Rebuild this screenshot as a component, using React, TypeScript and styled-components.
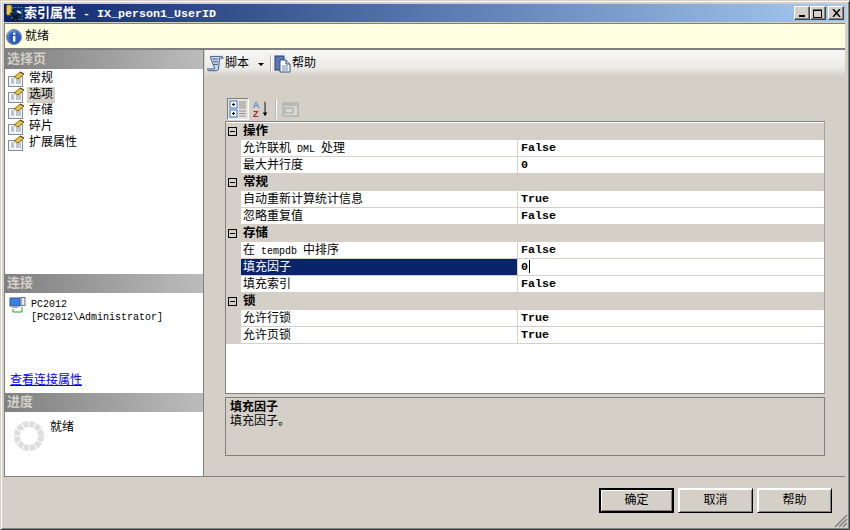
import React from 'react';
import styled, { createGlobalStyle } from 'styled-components';

const CJK = '"Liberation Mono", "Noto Sans CJK SC", monospace';

const Global = createGlobalStyle`
  html, body { margin: 0; padding: 0; background: #d4d0c8; }
  * { box-sizing: border-box; }
`;

const Dialog = styled.div`
  width: 850px; height: 530px; background: #d4d0c8;
  font: 12px/14px ${CJK}; color: #000;
  display: flex; flex-direction: column; position: relative;
  padding: 4px 4px 4px 3px;
  border-top: 1px solid #d4d0c8; border-left: 1px solid #d4d0c8;
  border-right: 1px solid #404040; border-bottom: 1px solid #404040;
  box-shadow: inset 1px 1px 0 #fff, inset -1px -1px 0 #808080;
  overflow: hidden;
`;
const TitleBar = styled.div`
  height: 18px; flex: none; margin: -1px -1px 0 0;
  background: linear-gradient(90deg, #0a246a, #a6caf0);
  display: flex; align-items: center; padding: 0 2px 0 2px;
`;
const TitleText = styled.span`
  color: #fff; font: bold 13px/16px ${CJK}; flex: 1; white-space: pre; padding-top: 2px;
`;
const TitleLatin = styled.span`font-size: 11.67px;`;
const WinBtns = styled.div`display: flex; align-items: center;`;
const WinBtn = styled.div<{ $gap?: number }>`
  width: 16px; height: 14px; background: #d4d0c8; margin-left: ${p => p.$gap ?? 0}px;
  border-top: 1px solid #fff; border-left: 1px solid #fff;
  border-right: 1px solid #404040; border-bottom: 1px solid #404040;
  box-shadow: inset -1px -1px 0 #808080;
  display: flex; align-items: center; justify-content: center;
`;
const MessageBar = styled.div`
  height: 27px; flex: none; margin: 1px 0 0 0; background: #ffffe1;
  border-top: 1px solid #808080; border-bottom: 2px solid #808080;
  border-left: 1px solid #808080;
  display: flex; align-items: center; padding: 1px 0 0 1px; gap: 3px; font-size: 12px;
`;
const Body = styled.div`
  height: 427px; flex: none; display: flex; border-bottom: 1px solid #808080;
`;
const Side = styled.div`
  width: 200px; flex: none; display: flex; flex-direction: column;
  background: #fff; border-left: 1px solid #808080; border-right: 1px solid #808080;
`;
const SideHeader = styled.div`
  height: 19px; flex: none; background: linear-gradient(90deg, #808080, #bcbcbc);
  color: #d4d0c8; font: bold 13px/19px ${CJK}; padding-left: 2px;
`;
const PageList = styled.div<{ $h: number }>`
  height: ${p => p.$h}px; flex: none; padding: 2px 0 0 3px;
`;
const PageRow = styled.div`
  height: 16px; display: flex; align-items: center; gap: 2px;
`;
const PageLabel = styled.span<{ $sel?: boolean }>`
  background: ${p => (p.$sel ? '#d4d0c8' : 'transparent')}; padding: 0 2px; line-height: 16px;
`;
const ConnBox = styled.div`
  height: 100px; flex: none; display: flex; flex-direction: column; padding: 4px 0 0 4px;
`;
const ConnRow = styled.div`display: flex; gap: 5px; flex: 1;`;
const ConnText = styled.div`font: 10px/13px "Liberation Mono", monospace; padding-top: 1px; white-space: pre;`;
const ConnLink = styled.a`
  color: #0000ff; text-decoration: underline; font-size: 12px; line-height: 14px; margin: 0 0 0 1px;
  padding-bottom: 5px;
`;
const ProgressBox = styled.div`
  flex: 1; display: flex; gap: 5px; padding: 6px 0 0 8px;
`;
const ProgressText = styled.span`margin-top: 3px;`;
const Main = styled.div`
  flex: 1; display: flex; flex-direction: column; min-width: 0;
`;
const ToolStrip = styled.div`
  height: 26px; flex: none; background: linear-gradient(180deg, #f7f7f5, #ebeae7 70%, #d4d0c8);
  display: flex; align-items: center; padding: 2px 0 0 2px; margin-left: 1px;
`;
const ToolItem = styled.span`display: flex; align-items: center; gap: 1px;`;
const Caret = styled.span`
  width: 0; height: 0; border: 3px solid transparent; border-top: 3px solid #000; border-bottom: 0;
  margin: 1px 4px 0 9px;
`;
const ToolSep = styled.span<{ $h?: number }>`
  width: 1px; height: ${p => p.$h ?? 18}px; background: #b8b8b4; border-right: 1px solid #fff; margin: 0 2px; box-sizing: content-box;
`;
const Content = styled.div`
  flex: 1; padding: 21px 20px 0 21px; display: flex; flex-direction: column;
`;
const GridTools = styled.div`
  height: 24px; flex: none; display: flex; align-items: center; padding-left: 2px; gap: 1px;
`;
const ToolToggle = styled.div<{ $on?: boolean }>`
  width: 22px; height: 22px; display: flex; align-items: center; justify-content: center;
  ${p => (p.$on ? 'background:#e6e4de;border:1px solid;border-color:#808080 #fff #fff #808080;' : '')}
`;
const Grid = styled.div`
  height: 273px; flex: none; background: #fff; padding: 1px 0 0 0;
  border: 1px solid #808080; border-right-color: #a0a0a0;
`;
const GroupRow = styled.div`
  height: 17px; background: #d4d0c8; display: flex; align-items: center;
  gap: 6px; padding-left: 2px;
`;
const GroupLabel = styled.span`font: bold 12.5px/17px ${CJK}; padding-top: 2px;`;
const Expander = styled.span`
  width: 9px; height: 9px; border: 1px solid #000; position: relative; flex: none;
  &::after { content: ''; position: absolute; left: 1px; right: 1px; top: 3px; height: 1px; background: #000; }
`;
const PropRow = styled.div`
  height: 17px; display: flex; background: #d4d0c8; padding-left: 15px;
`;
const PropName = styled.div<{ $sel?: boolean }>`
  width: 276px; flex: none; height: 16px; line-height: 18px; padding-left: 2px; white-space: pre; overflow: hidden;
  background: ${p => (p.$sel ? '#0a246a' : '#fff')}; color: ${p => (p.$sel ? '#fff' : '#000')};
`;
const NameLatin = styled.span`font-size: 10px;`;
const PropValue = styled.div`
  flex: 1; height: 16px; margin-left: 1px; background: #fff; padding-left: 3px;
  font: bold 11.67px/16px "Liberation Mono", monospace; display: flex;
`;
const CaretBar = styled.span`width: 1px; height: 13px; background: #000; margin: 1px 0 0 1px;`;
const Desc = styled.div`
  height: 59px; flex: none; margin-top: 3px; border: 1px solid #808080; padding: 3px 0 0 4px; line-height: 14px;
`;
const DescTitle = styled.div`font-weight: bold;`;
const Footer = styled.div`
  flex: 1; display: flex; justify-content: flex-end; align-items: flex-start;
  padding: 11px 13px 0 0; gap: 4px;
`;
const Btn = styled.button<{ $def?: boolean }>`
  width: 75px; height: 25px; background: #d4d0c8; padding: 0; font: 12px/14px ${CJK}; color: #000;
  border: ${p => (p.$def ? '2px' : '1px')} solid #000;
  border-top-color: ${p => (p.$def ? '#000' : '#fff')}; border-left-color: ${p => (p.$def ? '#000' : '#fff')};
  box-shadow: inset 1px 1px 0 #fff, inset -1px -1px 0 #808080;
`;
const Grip = styled.svg`position: absolute; right: 1px; bottom: 1px;`;

const PageIcon = () => (
  <svg width="17" height="16" viewBox="0 0 17 16">
    <rect x="0.5" y="5.5" width="14" height="10" fill="#f4f4f4" stroke="#7f8c9c" />
    <path d="M3 8h3M3 10h3M3 12h3M8 8h5M8 10h5M8 12h5" stroke="#8a97a8" />
    <path d="M6 6l6-5 4 2-6 5z" fill="#e8c040" stroke="#6c5a10" strokeWidth="0.8" />
    <path d="M12 1l4 2" stroke="#404040" />
  </svg>
);
const InfoIcon = () => (
  <svg width="16" height="16" viewBox="0 0 16 16">
    <defs><radialGradient id="ig" cx=".4" cy=".35" r=".7"><stop offset="0" stopColor="#9bbcf0" /><stop offset="1" stopColor="#1c46a8" /></radialGradient></defs>
    <circle cx="8" cy="8" r="7.5" fill="url(#ig)" stroke="#7a8aa8" />
    <circle cx="8" cy="8" r="5.5" fill="#2a5cc8" />
    <rect x="7" y="7" width="2.4" height="5.5" fill="#fff" />
    <rect x="7" y="3.6" width="2.4" height="2.2" fill="#fff" />
  </svg>
);
const AppIcon = () => (
  <svg width="18" height="18" viewBox="0 0 18 18" style={{ flex: 'none' }}>
    <path d="M6 3.500h10v12H6z" fill="none" stroke="#30d030" strokeDasharray="1.500 1.500" />
    <rect x="0.500" y="1" width="5" height="10" rx="1" fill="#e8c848" stroke="#8a6a10" strokeWidth=".7" />
    <path d="M4 9l9 8M14 9l-8 8" stroke="#101010" strokeWidth="1.600" />
    <path d="M11 7l4 2" stroke="#e0e0e0" strokeWidth="2.400" />
  </svg>
);
const ScriptIcon = () => (
  <svg width="17" height="18" viewBox="0 0 19 19">
    <path d="M4 1h12c1.500 0 2 1 2 2h-4l-1 11c0 2-1 3-2.500 3H2c-1 0-1.500-1-1.500-2H8l.5-1L4 3z" fill="#c8d4ec" stroke="#33507e" />
    <path d="M6 4h6M7 7h5M7 10h5" stroke="#33507e" />
  </svg>
);
const HelpIcon = () => (
  <svg width="17" height="18" viewBox="0 0 17 18">
    <rect x="1" y="1" width="9" height="14" fill="#5a78b8" stroke="#26406e" />
    <path d="M6 5h6l4 4v8H6z" fill="#fff" stroke="#33507e" />
    <path d="M12 5v4h4" fill="#c8d4ec" stroke="#33507e" />
    <path d="M8 11h6M8 13h6M8 15h6" stroke="#7088b0" />
  </svg>
);
const CategorizedIcon = () => (
  <svg width="18" height="18" viewBox="0 0 18 18">
    <rect x="1" y="1" width="7" height="7" fill="#fff" stroke="#3870c8" />
    <rect x="1" y="10" width="7" height="7" fill="#fff" stroke="#3870c8" />
    <path d="M3 4.500h3M4.500 3v3M3 13.500h3M4.500 12v3" stroke="#000" />
    <path d="M10 2h7M10 4h7M10 6h7M10 8h7M10 11h7M10 13.500h7M10 16h7" stroke="#8c8c8c" />
  </svg>
);
const SortIcon = () => (
  <svg width="18" height="18" viewBox="0 0 20 20">
    <text x="1" y="9" fontFamily="Liberation Sans" fontSize="10" fill="#3060c0">A</text>
    <text x="1" y="19" fontFamily="Liberation Sans" fontWeight="bold" fontSize="10" fill="#b02020">Z</text>
    <path d="M14.500 2v14" stroke="#000" /><path d="M12 14h5l-2.500 4z" fill="#000" />
  </svg>
);
const PagesIcon = () => (
  <svg width="18" height="18" viewBox="0 0 18 18">
    <rect x="1" y="3" width="15" height="13" fill="#d8d8d4" stroke="#a0a09c" />
    <rect x="1" y="3" width="15" height="3" fill="#b8b8b4" />
    <rect x="3" y="8" width="8" height="5" fill="none" stroke="#a0a09c" />
  </svg>
);
const ServerIcon = () => (
  <svg width="17" height="17" viewBox="0 0 17 17" style={{ flex: 'none' }}>
    <rect x="1" y="1" width="10" height="8" fill="#3880e8" stroke="#405878" />
    <rect x="3" y="9" width="6" height="2" fill="#a0a8b4" />
    <rect x="12" y="0.500" width="4" height="8" fill="#e8e8e8" stroke="#607088" />
    <path d="M4 12v3h9v-5" fill="none" stroke="#20a020" />
  </svg>
);
const Spinner = () => (
  <svg width="32" height="32" viewBox="0 0 32 32" style={{ flex: 'none', marginTop: 2 }}>
    <circle cx="16" cy="16" r="12" fill="none" stroke="#dedede" strokeWidth="6" strokeDasharray="5.280 1" />
  </svg>
);

const mixed = (s: string, Latin: typeof NameLatin) =>
  s.split(/([\x20-\x7e]+)/).map((part, i) =>
    /[\x20-\x7e]/.test(part) ? <Latin key={i}>{part}</Latin> : part,
  );

type Item = { g: string; rows: [string, string, boolean?][] };
const groups: Item[] = [
  { g: '操作', rows: [['允许联机 DML 处理', 'False'], ['最大并行度', '0']] },
  { g: '常规', rows: [['自动重新计算统计信息', 'True'], ['忽略重复值', 'False']] },
  { g: '存储', rows: [['在 tempdb 中排序', 'False'], ['填充因子', '0', true], ['填充索引', 'False']] },
  { g: '锁', rows: [['允许行锁', 'True'], ['允许页锁', 'True']] },
];
const pages = ['常规', '选项', '存储', '碎片', '扩展属性'];

export default function App() {
  return (
    <>
      <Global />
      <Dialog>
        <TitleBar>
          <AppIcon />
          <TitleText>索引属性<TitleLatin>{' - IX_person1_UserID'}</TitleLatin></TitleText>
          <WinBtns>
            <WinBtn>
              <svg width="8" height="8"><rect x="1" y="6" width="6" height="2" fill="#000" /></svg>
            </WinBtn>
            <WinBtn>
              <svg width="10" height="9"><path d="M0.500 1.500h8v7h-8zM0 1h9" fill="none" stroke="#000" /></svg>
            </WinBtn>
            <WinBtn $gap={2}>
              <svg width="9" height="8"><path d="M1 0l7 8M8 0l-7 8" stroke="#000" strokeWidth="1.500" /></svg>
            </WinBtn>
          </WinBtns>
        </TitleBar>
        <MessageBar><InfoIcon />就绪</MessageBar>
        <Body>
          <Side>
            <SideHeader>选择页</SideHeader>
            <PageList $h={205}>
              {pages.map((p, i) => (
                <PageRow key={p}><PageIcon /><PageLabel $sel={i === 1}>{p}</PageLabel></PageRow>
              ))}
            </PageList>
            <SideHeader>连接</SideHeader>
            <ConnBox>
              <ConnRow>
                <ServerIcon />
                <ConnText>{'PC2012\n[PC2012\\Administrator]'}</ConnText>
              </ConnRow>
              <ConnLink>查看连接属性</ConnLink>
            </ConnBox>
            <SideHeader>进度</SideHeader>
            <ProgressBox><Spinner /><ProgressText>就绪</ProgressText></ProgressBox>
          </Side>
          <Main>
            <ToolStrip>
              <ToolItem><ScriptIcon />脚本</ToolItem>
              <Caret />
              <ToolSep />
              <ToolItem><HelpIcon />帮助</ToolItem>
            </ToolStrip>
            <Content>
              <GridTools>
                <ToolToggle $on><CategorizedIcon /></ToolToggle>
                <ToolToggle><SortIcon /></ToolToggle>
                <ToolSep $h={20} />
                <ToolToggle><PagesIcon /></ToolToggle>
              </GridTools>
              <Grid>
                {groups.map(g => (
                  <React.Fragment key={g.g}>
                    <GroupRow><Expander /><GroupLabel>{g.g}</GroupLabel></GroupRow>
                    {g.rows.map(([n, v, s]) => (
                      <PropRow key={n}>
                        <PropName $sel={s}>{mixed(n, NameLatin)}</PropName>
                        <PropValue>{v}{s && <CaretBar />}</PropValue>
                      </PropRow>
                    ))}
                  </React.Fragment>
                ))}
              </Grid>
              <Desc>
                <DescTitle>填充因子</DescTitle>
                <div>填充因子。</div>
              </Desc>
            </Content>
          </Main>
        </Body>
        <Footer>
          <Btn $def>确定</Btn>
          <Btn>取消</Btn>
          <Btn>帮助</Btn>
        </Footer>
        <Grip width="14" height="14" viewBox="0 0 14 14">
          <path d="M1 13L13 1M5 13l8-8M9 13l4-4" stroke="#808080" strokeWidth="1.500" />
        </Grip>
      </Dialog>
    </>
  );
}
